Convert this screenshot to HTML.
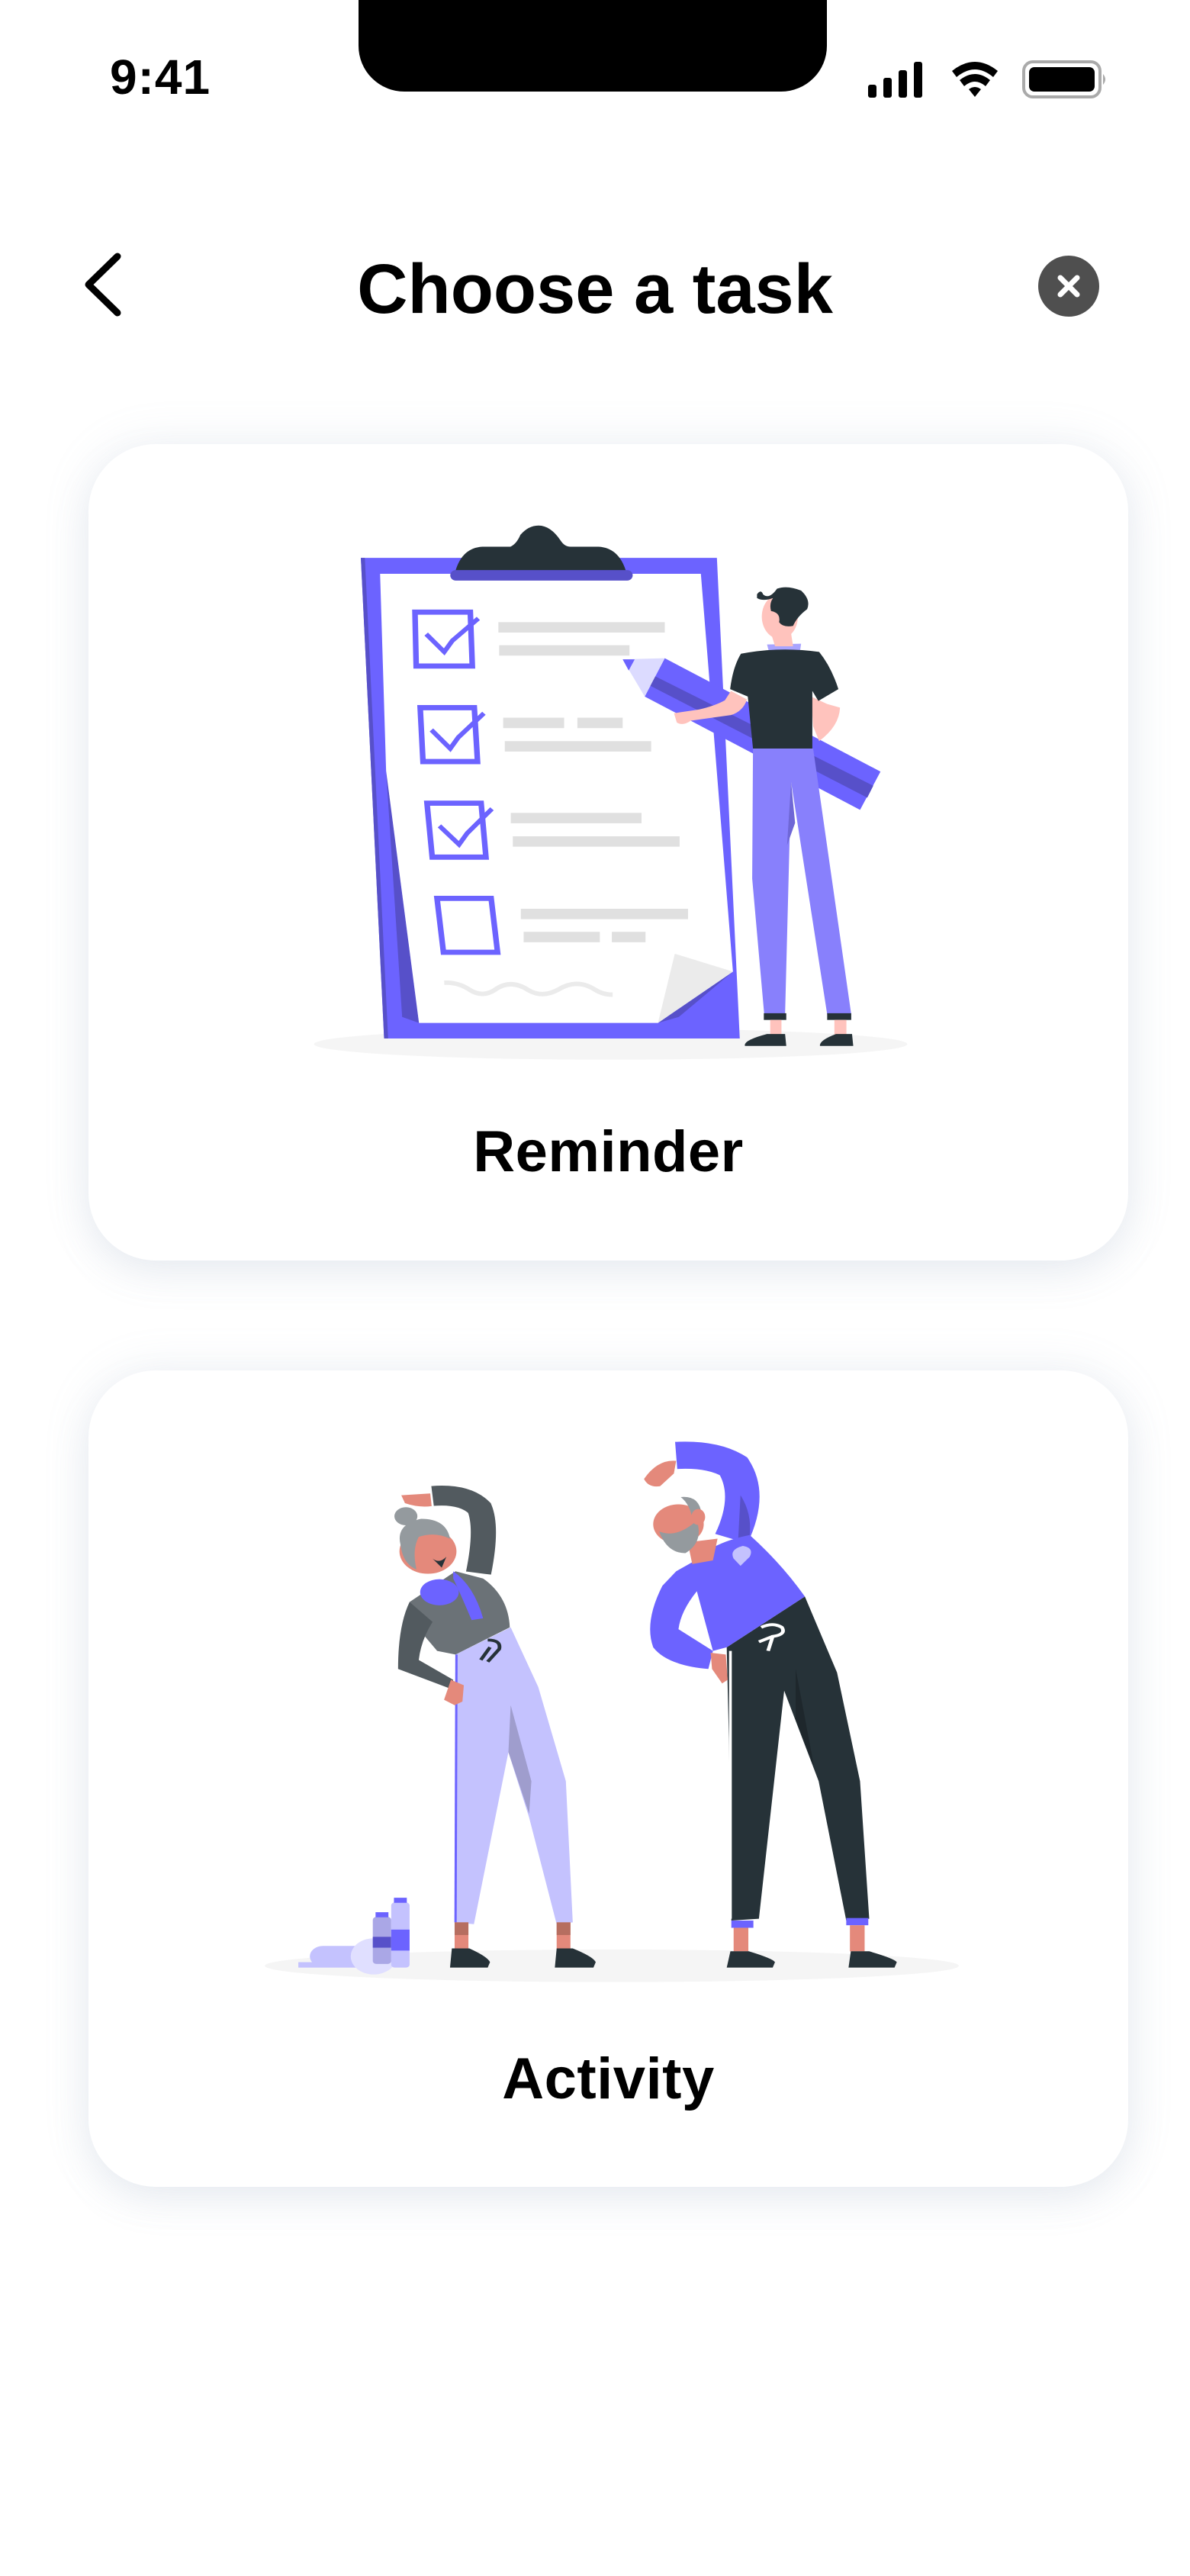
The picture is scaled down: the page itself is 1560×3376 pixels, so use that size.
<!DOCTYPE html>
<html><head><meta charset="utf-8"><style>
*{margin:0;padding:0;box-sizing:border-box}
body{width:1560px;height:3376px;background:#fff;position:relative;overflow:hidden;font-family:"Liberation Sans",sans-serif;color:#000}
.abs{position:absolute}
.card{position:absolute;left:116px;width:1363px;height:1070px;background:#fff;border-radius:88px;box-shadow:0 0 60px rgba(150,165,190,0.16),0 20px 50px rgba(150,165,190,0.12)}
.lbl{position:absolute;left:0;width:100%;text-align:center;font-weight:700;font-size:76px;letter-spacing:0.5px}
</style></head><body>
<div class="abs" style="left:470px;top:0;width:614px;height:120px;background:#000;border-radius:0 0 60px 60px"></div>
<div class="abs" style="left:144px;top:64px;font-size:64px;font-weight:700;letter-spacing:1px">9:41</div>
<svg class="abs" style="left:1130px;top:75px" width="330" height="55" viewBox="0 0 330 55">
<rect x="8" y="36" width="11" height="17" rx="3"/><rect x="28" y="27" width="11" height="26" rx="3"/><rect x="48" y="17" width="11" height="36" rx="3"/><rect x="68" y="6" width="11" height="47" rx="3"/>
<path d="M118 18 Q148 -6 178 18 L172 26 Q148 6 124 26Z"/><path d="M128 30 Q148 14 168 30 L162 38 Q148 26 134 38Z"/><path d="M140 42 Q148 36 156 42 L148 52Z"/>
<rect x="212" y="6" width="100" height="46" rx="12" fill="none" stroke="#aaa" stroke-width="4"/><rect x="219" y="13" width="86" height="32" rx="7"/><path d="M316 22 Q322 29 316 36Z" fill="#aaa"/>
</svg>
<svg class="abs" style="left:100px;top:320px" width="80" height="110"><polyline points="54,16 16,53 54,90" fill="none" stroke="#000" stroke-width="9" stroke-linecap="round" stroke-linejoin="round"/></svg>
<div class="abs" style="left:0;width:1560px;top:327px;text-align:center;font-size:92px;font-weight:700">Choose a task</div>
<svg class="abs" style="left:1361px;top:335px" width="80" height="80"><circle cx="40" cy="40" r="40" fill="#4f4f4f"/><path d="M29 29L51 51M51 29L29 51" stroke="#fff" stroke-width="7" stroke-linecap="round"/></svg>

<div class="card" style="top:582px">
<div class="lbl" style="top:884px">Reminder</div></div>
<div class="card" style="top:1796px">
<div class="lbl" style="top:885px">Activity</div></div>

<svg class="abs" style="left:380px;top:640px" width="820" height="760" viewBox="0 0 1560 1560" preserveAspectRatio="none">
<ellipse cx="800" cy="1495" rx="740" ry="42" fill="#f5f5f5"/>
<polygon points="177,187 1065,187 1122,1480 235,1480" fill="#6c63ff"/>
<polygon points="177,187 187,187 245,1480 235,1480" fill="#5750c9"/>
<polygon points="240,760 322,1438 280,1422" fill="#5750c9"/>
<polygon points="1105,1300 970,1422 918,1438" fill="#5750c9"/>
<polygon points="225,230 1025,230 1105,1300 918,1438 322,1438 240,760" fill="#fff"/>
<polygon points="960,1252 1105,1300 918,1438" fill="#ebebeb"/>
<path d="M413 222 Q430 160 480 157 L550 157 Q565 150 575 125 Q595 100 620 100 Q650 100 675 140 Q685 157 700 157 L770 157 Q820 160 838 222Z" fill="#263238"/>
<rect x="400" y="220" width="455" height="28" rx="14" fill="#5750c9"/>
<g fill="none" stroke="#6c63ff" stroke-width="14">
<polygon points="312,333 450,333 455,478 315,478"/><polygon points="325,590 460,590 468,735 332,735"/><polygon points="342,847 477,847 489,992 355,992"/><polygon points="367,1103 502,1103 518,1248 383,1248"/>
<polyline points="340,392 385,440 405,410 470,350" stroke-width="12"/><polyline points="353,650 400,700 420,670 484,605" stroke-width="12"/><polyline points="373,908 422,958 442,928 504,862" stroke-width="12"/>
</g>
<g fill="#e0e0e0"><rect x="520" y="360" width="415" height="28"/><rect x="522" y="422" width="325" height="28"/><rect x="532" y="617" width="152" height="28"/><rect x="717" y="617" width="113" height="28"/><rect x="536" y="680" width="365" height="28"/><rect x="551" y="873" width="326" height="28"/><rect x="556" y="936" width="416" height="28"/><rect x="576" y="1131" width="417" height="28"/><rect x="583" y="1193" width="190" height="28"/><rect x="803" y="1193" width="84" height="28"/></g>
<path d="M385 1330 Q420 1328 450 1350 Q480 1370 510 1350 Q550 1318 595 1350 Q630 1372 670 1348 Q715 1318 760 1348 Q780 1362 805 1362" fill="none" stroke="#ebebeb" stroke-width="12"/>
<polygon points="935,457 1473,762 1422,865 885,560" fill="#6c63ff"/>
<polygon points="910,505 1455,800 1440,832 897,530" fill="#5750c9"/>
<polygon points="830,460 935,457 885,560" fill="#dcdbff"/>
<polygon points="830,460 860,460 845,490" fill="#6c63ff"/>
<polygon points="1155,700 1305,700 1400,1415 1340,1415 1250,790 1235,1415 1183,1415 1153,1050" fill="#8880fc"/>
<polygon points="1250,790 1260,900 1240,960" fill="#6f67d6"/>
<rect x="1182" y="1412" width="56" height="18" fill="#263238"/><rect x="1340" y="1412" width="60" height="18" fill="#263238"/>
<rect x="1198" y="1430" width="28" height="40" fill="#ffc3bd"/><rect x="1358" y="1430" width="30" height="40" fill="#ffc3bd"/>
<path d="M1190 1468 L1235 1468 L1238 1500 L1135 1500 Q1130 1485 1190 1468Z" fill="#263238"/>
<path d="M1362 1468 L1402 1468 L1405 1500 L1322 1500 Q1320 1485 1362 1468Z" fill="#263238"/>
<path d="M1300 560 L1340 580 L1372 590 Q1370 640 1320 680 L1305 640Z" fill="#ffc3bd"/>
<path d="M1190 420 L1275 418 L1272 440 L1195 440Z" fill="#a9a4ff"/>
<path d="M1125 445 Q1220 425 1320 440 Q1350 480 1368 540 L1318 572 L1303 545 L1303 700 L1155 700 L1142 560 L1098 540 Q1105 480 1125 445Z" fill="#263238"/>
<path d="M1100 545 L1140 568 Q1130 600 1100 610 L1000 625 Q980 640 965 630 L958 605 L1020 595 Q1060 585 1085 570Z" fill="#ffc3bd"/>
<path d="M1200 390 L1250 390 L1255 425 L1210 425Z" fill="#ffc3bd"/>
<ellipse cx="1222" cy="345" rx="45" ry="60" fill="#ffc3bd"/>
<path d="M1165 285 Q1175 270 1180 285 Q1195 300 1215 270 Q1240 260 1275 275 Q1300 300 1290 325 Q1265 345 1255 370 Q1230 375 1220 360 Q1225 335 1200 330 Q1195 310 1205 295 Q1180 305 1165 295Z" fill="#263238"/>
</svg>

<svg class="abs" style="left:320px;top:1860px" width="940" height="740" viewBox="0 0 1560 1560" preserveAspectRatio="none">
<ellipse cx="800" cy="1510" rx="755" ry="45" fill="#f5f5f5"/>
<rect x="118" y="1500" width="180" height="15" fill="#c4c2fe"/>
<rect x="143" y="1455" width="190" height="58" rx="29" fill="#c4c2fe"/>
<circle cx="282" cy="1484" r="50" fill="#e0dfff"/>
<rect x="280" y="1375" width="40" height="130" rx="8" fill="#aaa7e6"/><rect x="280" y="1430" width="40" height="30" fill="#5750c9"/><rect x="286" y="1362" width="28" height="14" fill="#6c63ff"/>
<rect x="320" y="1335" width="40" height="180" rx="8" fill="#c4c2fe"/><rect x="320" y="1410" width="40" height="58" fill="#6c63ff"/><rect x="326" y="1322" width="28" height="14" fill="#6c63ff"/>
<polygon points="460,650 580,575 640,740 700,1000 715,1390 680,1395 620,1100 575,920 500,1395 458,1390" fill="#c4c2fe"/>
<polygon points="580,790 625,1000 620,1090 575,920" fill="#9f9dcd"/>
<line x1="462" y1="650" x2="460" y2="1390" stroke="#6c63ff" stroke-width="5"/>
<rect x="458" y="1390" width="30" height="75" fill="#e4897b"/><rect x="680" y="1390" width="30" height="75" fill="#e4897b"/>
<rect x="458" y="1390" width="30" height="35" fill="#b66e60"/><rect x="680" y="1390" width="30" height="35" fill="#b66e60"/>
<path d="M452 1462 L490 1462 Q530 1485 535 1500 L530 1515 L448 1515Z" fill="#263238"/>
<path d="M680 1462 L715 1462 Q760 1485 765 1500 L760 1515 L676 1515Z" fill="#263238"/>
<path d="M510 425 Q530 300 512 245 Q480 205 410 212" fill="none" stroke="#525a5f" stroke-width="55"/>
<path d="M342 210 L405 205 L408 240 Q380 245 350 232Z" fill="#e4897b"/>
<path d="M360 505 L460 420 L520 440 Q575 490 578 575 L460 650 L420 640 L380 580Z" fill="#6b7277"/>
<path d="M360 505 Q335 570 335 690 L450 745 L455 720 L380 665 Q385 610 410 560Z" fill="#525a5f"/>
<path d="M450 720 L478 735 L475 780 L458 790 L435 775Z" fill="#e4897b"/>
<circle cx="400" cy="365" r="62" fill="#e4897b"/>
<path d="M340 345 Q330 290 385 275 Q440 275 448 330 Q415 310 380 325 Q365 360 375 415 Q345 400 340 345Z" fill="#949a9e"/>
<circle cx="352" cy="268" r="25" fill="#949a9e"/>
<path d="M410 385 Q425 400 440 380 L430 410Z" fill="#263238"/>
<path d="M455 420 Q500 460 520 550 L495 555 Q470 480 455 440Z" fill="#6c63ff"/>
<ellipse cx="425" cy="478" rx="42" ry="36" fill="#6c63ff"/>
<path d="M530 610 Q560 610 555 635 L530 670 M535 630 L515 665" fill="none" stroke="#263238" stroke-width="8"/>
<polygon points="1050,630 1220,490 1290,700 1340,1000 1360,1380 1310,1385 1250,1000 1175,750 1120,1380 1060,1385 1055,900" fill="#263238"/>
<polygon points="1200,690 1240,960 1200,830" fill="#1e272c"/>
<line x1="1058" y1="640" x2="1058" y2="1380" stroke="#fff" stroke-width="6"/>
<rect x="1060" y="1385" width="48" height="20" fill="#6c63ff"/><rect x="1310" y="1378" width="48" height="20" fill="#6c63ff"/>
<rect x="1065" y="1405" width="32" height="65" fill="#e4897b"/><rect x="1318" y="1398" width="32" height="72" fill="#e4897b"/>
<path d="M1058 1470 L1098 1470 Q1150 1490 1155 1500 L1150 1515 L1050 1515Z" fill="#263238"/>
<path d="M1320 1470 L1360 1470 Q1415 1490 1420 1500 L1415 1515 L1315 1515Z" fill="#263238"/>
<path d="M1060 330 Q1105 210 1065 130 Q1020 95 940 100" fill="none" stroke="#6c63ff" stroke-width="75"/>
<path d="M1080 210 Q1105 260 1100 320 L1075 330Z" fill="#5750c9"/>
<path d="M940 115 Q900 110 870 165 Q880 190 905 185 L935 150Z" fill="#e4897b"/>
<path d="M940 420 L975 395 Q1020 340 1100 320 Q1170 400 1220 490 L1050 630 L1020 640 L985 475 Q950 530 945 580 L1020 640 L1010 690 Q920 680 890 630 Q870 560 910 460Z" fill="#6c63ff"/>
<path d="M1015 645 L1048 650 L1052 720 L1040 730 L1018 690Z" fill="#e4897b"/>
<path d="M1085 350 Q1110 355 1100 380 L1080 405 L1065 385 Q1055 360 1085 350Z" fill="#c4c2fe"/>
<path d="M965 340 L1030 330 L1020 390 L975 400Z" fill="#e4897b"/>
<circle cx="945" cy="290" r="55" fill="#e4897b"/>
<path d="M903 310 Q940 330 985 280 Q1000 340 960 370 Q920 370 903 310Z" fill="#949a9e"/>
<path d="M950 215 Q990 210 995 260 L975 275 Q970 235 950 215Z" fill="#949a9e"/>
<ellipse cx="988" cy="270" rx="15" ry="22" fill="#e4897b"/>
<path d="M1125 575 Q1150 560 1170 575 Q1180 595 1150 600 L1140 640 M1150 600 L1120 615" fill="none" stroke="#fff" stroke-width="8"/>
</svg>
</body></html>
